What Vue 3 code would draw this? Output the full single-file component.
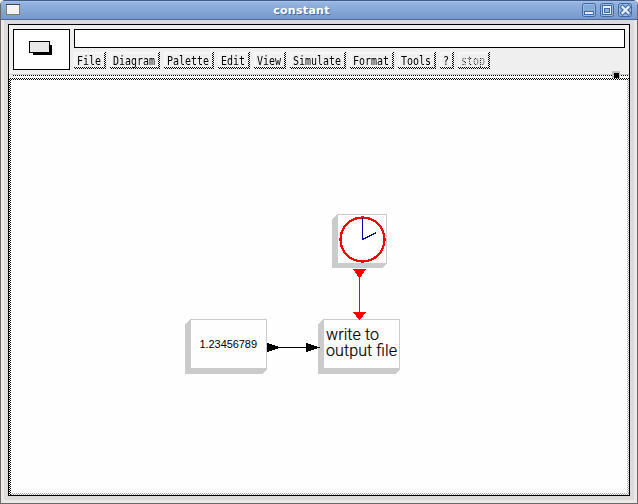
<script setup>
const menus = ['File', 'Diagram', 'Palette', 'Edit', 'View', 'Simulate', 'Format', 'Tools', '?', 'stop']
</script>

<template>
  <div class="window">
    <header class="titlebar">
      <svg class="winicon" width="14" height="11" viewBox="0 0 14 11" shape-rendering="crispEdges">
        <rect width="14" height="11" fill="#807e7b" />
        <rect width="14" height="1" fill="#45474b" />
        <rect x="1" y="1" width="12" height="9" fill="#f4f4f4" />
      </svg>
      <h1 class="title">constant</h1>
      <svg class="controls" width="50" height="15" viewBox="0 0 50 15" fill="none">
        <g stroke="#41689f" fill="#86a8d9">
          <rect x=".5" y=".5" width="13" height="13" rx="2" />
          <rect x="18.5" y=".5" width="13" height="13" rx="2" />
          <rect x="36.5" y=".5" width="13" height="13" rx="2" />
        </g>
        <g stroke="#9dbae5">
          <rect x="1.5" y="1.5" width="11" height="11" rx="1" />
          <rect x="19.5" y="1.5" width="11" height="11" rx="1" />
          <rect x="37.5" y="1.5" width="11" height="11" rx="1" />
        </g>
        <rect x="2.5" y="8.5" width="9" height="3" fill="#e6eefb" stroke="#41689f" />
        <g shape-rendering="crispEdges">
          <rect x="20" y="2" width="10" height="10" fill="#41689f" />
          <rect x="21" y="3" width="8" height="8" fill="#e6eefb" />
          <rect x="22" y="5" width="6" height="5" fill="#41689f" />
          <rect x="23" y="6" width="4" height="3" fill="#8fb0df" />
        </g>
        <path d="M40.500 4l6 6m0-6l-6 6" stroke="#41689f" stroke-width="4.300" stroke-linecap="square" />
        <path d="M40.500 4l6 6m0-6l-6 6" stroke="#e6eefb" stroke-width="2.300" stroke-linecap="square" />
      </svg>
    </header>
    <div class="frame">
      <main class="app">
        <div class="toolbar">
          <div class="logo">
            <svg width="23" height="14" viewBox="0 0 23 14" shape-rendering="crispEdges">
              <rect x="4" y="4" width="19" height="10" fill="#000" />
              <rect x=".5" y=".5" width="20" height="11" fill="#e8e8e8" stroke="#000" />
            </svg>
          </div>
          <div class="tools">
            <div class="entry"></div>
            <nav class="menu">
              <div v-for="m in menus" :key="m" class="shade" :style="{ width: m.length * 6 + 8 + 'px' }">
                <div class="light">
                  <div class="face">
                    <span class="label" :class="{ disabled: m === 'stop' }">{{ m }}</span>
                  </div>
                </div>
              </div>
            </nav>
          </div>
        </div>
        <div class="sash"><i class="grip"></i></div>
        <div class="canvas">
          <svg class="diagram" width="616" height="413" viewBox="11 80 616 413">
            <g shape-rendering="crispEdges">
              <path d="M337 214H387V263L382 268H332V219Z" fill="#cbcbcb" />
              <rect x="338" y="215" width="48" height="48" fill="#fff" />
              <path d="M190 319H267V369L262 374H185V324Z" fill="#cbcbcb" />
              <rect x="191" y="320" width="75" height="48" fill="#fefefe" />
              <path d="M323 319H400V369L395 374H318V324Z" fill="#cbcbcb" />
              <rect x="324" y="320" width="75" height="48" fill="#fefefe" />
              <circle cx="362.5" cy="239.5" r="22" fill="none" stroke="#f00" stroke-width="2.300" />
              <path d="M362.5 218V239.5L376.5 232.5" fill="none" stroke="#0000b0" />
              <path d="M353 269H366L360 278H359Z M353 312H366L360 320H359Z" fill="#f00" />
              <path d="M359.5 277V313" stroke="#f00" />
              <path d="M267 343L279 347V348L267 352Z M306 343L318 347V348L306 352Z" fill="#000" />
              <path d="M278 347.5H320" stroke="#000" />
            </g>
            <g class="text">
              <text x="199.5" y="348" font-size="11" textLength="57.5">1.23456789</text>
              <text class="light-text" font-size="16">
                <tspan x="326" y="340" textLength="53">write to</tspan>
                <tspan x="326" y="356" textLength="71">output file</tspan>
              </text>
            </g>
          </svg>
        </div>
      </main>
    </div>
  </div>
</template>

<style>
body { background: #fff; }
</style>

<style scoped>
* { box-sizing: border-box; }
.window {
  width: 638px;
  height: 504px;
  display: flex;
  flex-direction: column;
  border: solid #69696b;
  border-width: 0 1px 1px;
  border-radius: 5px 5px 0 0;
  overflow: hidden;
  background: #dcdada;
}
.titlebar {
  height: 20px;
  flex: none;
  display: flex;
  align-items: flex-start;
  padding: 2px 5px 0;
  border-top: 1px solid #435c87;
  border-bottom: 1px solid #486a9c;
  background: linear-gradient(#a9c4ec 0, #93b2e0 2px, #7699cc 100%);
}
.winicon { margin-top: 1px; }
.title {
  flex: 1;
  margin: 0;
  padding-left: 1px;
  font: bold 11px/15px "DejaVu Sans", sans-serif;
  letter-spacing: .3px;
  color: #fff;
  text-align: center;
  text-shadow: 1px 1px 0 #49699a;
}
.controls { flex: none; }
.frame {
  flex: 1;
  border: solid #ebe8e6;
  border-width: 0 3px 3px;
  padding: 4px 4px 4px;
}
.app {
  height: 472px;
  border: 1px solid #000;
  background: #efefef;
  display: flex;
  flex-direction: column;
}
.toolbar {
  height: 50px;
  flex: none;
  display: flex;
  gap: 4px;
  padding: 4px 4px 0;
  border-bottom: 1px solid #c8c8c8;
}
.logo {
  width: 57px;
  height: 41px;
  border: 1px solid #000;
  background: #fff;
  display: flex;
  padding: 11px 0 0 15px;
}
.tools { flex: 1; }
.entry { height: 19px; border: 1px solid #000; background: #fff; }
.menu { display: flex; gap: 4px; margin-top: 4px; }
.shade {
  padding: 0 2px 2px 0;
  background: repeating-conic-gradient(#000 0 25%, #efefef 0 50%) 0 0 / 2px 2px;
}
.light {
  padding: 2px 0 0 2px;
  background: repeating-conic-gradient(#fff 0 25%, #efefef 0 50%) 0 0 / 2px 2px;
}
.face { height: 13px; padding: 0 0 0 1px; background: #efefef; }
.label {
  display: block;
  width: max-content;
  font: 12px/14px "DejaVu Sans Mono", monospace;
  color: #000;
  transform: scaleX(.8305);
  transform-origin: 0 0;
}
.disabled {
  color: transparent;
  background: repeating-conic-gradient(#000 0 25%, transparent 0 50%) 0 0 / 2px 2px;
  background-clip: text;
}
.sash {
  position: relative;
  height: 3px;
  flex: none;
  margin-left: 4px;
  background: repeating-linear-gradient(90deg, #000 0 1px, #fff 1px 2px) 0 0 / 100% 1px no-repeat #fff;
}
.grip {
  position: absolute;
  right: 9px;
  top: -4px;
  width: 8px;
  height: 8px;
  border: 1px solid #bbb;
  border-left-width: 2px;
  border-top-width: 2px;
  background: #000;
}
.canvas {
  flex: 1;
  padding: 2px;
  background:
    linear-gradient(#fefefe, #fefefe) 2px 2px / 616px 413px no-repeat,
    repeating-conic-gradient(#000 0 25%, #fff 0 50%) 0 0 / 2px 2px;
  position: relative;
}
.canvas::before,
.canvas::after {
  content: "";
  position: absolute;
  background: repeating-conic-gradient(#aaa 0 25%, #fff 0 50%) 0 0 / 2px 2px;
}
.canvas::before { right: 0; top: 2px; bottom: 0; width: 2px; }
.canvas::after { left: 2px; right: 0; bottom: 0; height: 2px; }
.diagram { display: block; }
.text { font-family: "Liberation Sans", Arial, sans-serif; fill: #000; }
.light-text { font-family: Roboto, "Liberation Sans", sans-serif; font-weight: 300; stroke: #000; stroke-width: .2px; }
</style>
